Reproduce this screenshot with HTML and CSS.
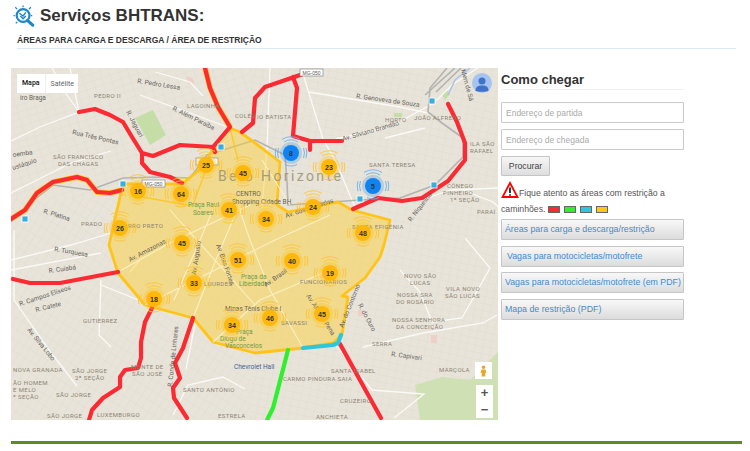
FILE: index.html
```html
<!DOCTYPE html>
<html lang="pt">
<head>
<meta charset="utf-8">
<title>Serviços BHTRANS</title>
<link rel="stylesheet" href="styles.css">
</head>
<body>
<header class="top">
  <svg class="logo" viewBox="0 0 24 24" width="22" height="22">
    <circle class="logo-ring" cx="11" cy="11.500" r="7"/>
    <path class="logo-mark" d="M7 9l4 3 3-4M8 12l3 3 3-3"/>
    <path class="logo-handle" d="M16 17l5.500 5"/>
    <path class="logo-rays" d="M11 .5v2M2.500 2.500l2 2M19.500 2.500l-2 2M.5 11.500h1.500M21 11.500h-1.500M3 20l1.500-1.500"/>
  </svg>
  <h1 class="title">Serviços BHTRANS:</h1>
</header>
<h2 class="subtitle">ÁREAS PARA CARGA E DESCARGA / ÁREA DE RESTRIÇÃO</h2>
<main class="content">
  <div class="map">
    <svg class="map-svg" viewBox="11 68 487 352" width="487" height="352">
      <defs>
        <pattern id="gridA" width="9" height="7" patternUnits="userSpaceOnUse" patternTransform="rotate(-18)">
          <path class="grid-line" d="M0 0H9M0 0V7"/>
        </pattern>
        <pattern id="gridB" width="7" height="10" patternUnits="userSpaceOnUse" patternTransform="rotate(32)">
          <path class="grid-line" d="M0 0H7M0 0V10"/>
        </pattern>
        <pattern id="gridC" width="8" height="7" patternUnits="userSpaceOnUse" patternTransform="rotate(12)">
          <path class="grid-line" d="M0 0H8M0 0V7"/>
        </pattern>
        <g id="halo">
          <path class="arc" d="M-7-11A13 13 0 0 1 7-11M-9-13.500A16 16 0 0 1 9-13.500M-12.500-5A13.500 13.500 0 0 0 -12.500 5M-15-5A16 16 0 0 0 -15 5M12.500-5A13.500 13.500 0 0 1 12.500 5M15-5A16 16 0 0 1 15 5M-6 11.500A13 13 0 0 0 6 11.500"/>
        </g>
        <g id="cy"><circle class="halo-y" r="11"/><use href="#halo" class="arc-y"/><circle class="dot-y" r="8"/></g>
        <g id="cb"><circle class="halo-b" r="11"/><use href="#halo" class="arc-b"/><circle class="dot-b" r="8"/></g>
      </defs>

      <rect class="land" x="11" y="68" width="487" height="352"/>
      <rect class="grid-a" x="11" y="68" width="240" height="130"/>
      <rect class="grid-b" x="11" y="198" width="240" height="222"/>
      <rect class="grid-c" x="251" y="68" width="247" height="352"/>
      <path class="park" d="M135 118l18-8 13 25-16 10z"/>
      <path class="park2" d="M415 385l27-8 28 3 28-28v68h-78z"/>
      <path class="park" d="M394 113h8v4h-8zM442 95l5-5 3 4-5 6z"/>
      <path class="pink" d="M186 76l6 2 3 5-6 1zM431 335h6v8h-6zM358 310h5v6h-5z"/>

      <path class="street-w" d="M70 68l9 44-39 15-29 14M79 112L67 95 52 68M11 193l60-30 40-12M11 270l90-17M11 260l60-15 40-12"/>
      <path class="street-w" d="M14 230V300l38 54 25 32M101 280l-2 55 12 12M101 285l45 18M140 95l50 18 40 15M155 72l35 10 13 14"/>
      <path class="street-w" d="M303 74l20 65 13 23 21 50M309 92l91 15 28 6M336 139l54-12 44-24 18-18 30-20M385 138l40-10M340 344l30 50 12 24M336 345l36 45 52 4-30 24M363 347l60-14 60-10 14-8M463 190l30 12 5 5M421 200l30-10 47-2M400 270l20 22 12 30 30-4 28-50-25-30M270 68l-3 80-5 60"/>
      <path class="street-w" d="M173 415l15-30 35-8 22 12M196 319l-10 50M140 260l-10 12"/>
      <path class="rail" d="M11 222L40 195 53 185 90 190 123 178 160 177 190 178 207 155 255 140 285 155 287 182 288 205 360 200 400 198 435 185 463 157V138L442 123 428 112 430 88 447 68"/>
      <path class="rail-blue" d="M448 95L455 80 470 68"/>
      <path class="rail" d="M425 95l30-27M436 92l25-24"/>

      <path class="area" d="M123 184H182L205 165 213 148 230 128 240 132 255 143 280 162 277 205 288 212 322 205 338 202 352 210 390 220 384 245 380 257 365 278 342 296 348 297 342 335 333 343 303 348 255 353 213 342 193 318 145 305 118 273 109 245z"/>
      <path class="area-line" d="M205 172L193 205M143 197L192 206M230 128L238 160"/>
      <path class="area-street" d="M118 272L170 243 250 205M145 305L275 240 330 215M193 318L215 262 235 215M174 300L200 240 215 205M213 342L260 300 330 270M303 348L270 290 250 240 238 205M170 210L255 305M262 160L290 205"/>

      <path class="road-glow" d="M11 219l14-9 12-17 16-11 24-5 10 3 10 12 13 1 12-3M205 68l5 20 8 19 12 20"/>
      <path class="road-red" d="M79 112l16-3 15 6 13 7 9 15 10 16 11 3 27-11 33 2 2 5M142 153v10l8 9 20 5 12 6M205 68l5 20 8 19 12 20-17 20"/>
      <path class="road-red" d="M242 132l11-9 2-25 10-11 38-13M293 77l4 11-4 48 17 5h32M310 141v9"/>
      <path class="road-red" d="M448 104l9 18 8 21v17l-17 21-26 17-20 3-24-3-25 11"/>
      <path class="road-red" d="M11 219l14-9 12-17 16-11 24-5 10 3 10 12 13 1 12-3M13 279l17 4h30l58-11"/>
      <path class="road-red" d="M152 308l-7 14-4 20v16l-3 10-13 2-5 7v10l-17 11-11 12-3 10M193 318l-10 30-8 15 5 15-7 10 1 10 13 20M340 344l41 74"/>
      <path class="road-green" d="M288 350l-15 58-6 12"/>
      <path class="road-cyan" d="M303 348l30-3 5-2 3-8"/>

      <g class="lbl">
        <text x="137" y="83" transform="rotate(9 137 83)">R. Pedro Lessa</text>
        <text x="20" y="100">iro Braga</text>
        <text x="94" y="98" class="area-lbl">PEDRO II</text>
        <text x="187" y="108" class="area-lbl">LAGOINHA</text>
        <text x="172" y="110" transform="rotate(26 172 110)">R. Além Paraíba</text>
        <text x="126" y="112" transform="rotate(62 126 112)">R. Jaguari</text>
        <text x="72" y="134" transform="rotate(13 72 134)">Rua Três Pontas</text>
        <text x="13" y="157" transform="rotate(-8 13 157)">oemba</text>
        <text x="13" y="170" transform="rotate(-18 13 170)">ustáquio</text>
        <text x="53" y="159" class="area-lbl">SÃO FRANCISCO</text>
        <text x="58" y="166" class="area-lbl">DAS CHAGAS</text>
        <text x="43" y="213" transform="rotate(17 43 213)">R. Platina</text>
        <text x="81" y="226" class="area-lbl">PRADO</text>
        <text x="128" y="228" class="area-lbl">RRO PRETO</text>
        <text x="188" y="207" class="lbl-green">Praça Raul</text>
        <text x="193" y="215" class="lbl-green">Soares</text>
        <text x="235" y="118" class="area-lbl">COLÉG</text>
        <text x="257" y="119" class="area-lbl">IO BATISTA</text>
        <text x="356" y="98" transform="rotate(8 356 98)">R. Genoveva de Souza</text>
        <text x="385" y="122" class="area-lbl">HORTO</text>
        <text x="414" y="120" class="area-lbl">JOÃO ALFREDO</text>
        <text x="343" y="141" transform="rotate(-16 343 141)">Av. Silviano Brandão</text>
        <text x="369" y="167" class="area-lbl">SANTA TERESA</text>
        <text x="470" y="146" class="area-lbl">ILA SÃO</text>
        <text x="470" y="153" class="area-lbl">RAFAEL</text>
        <text x="447" y="188" class="area-lbl">CÔNEGO</text>
        <text x="443" y="195" class="area-lbl">PINHEIRO</text>
        <text x="450" y="202" class="area-lbl">1ª SEÇÃO</text>
        <text x="477" y="214" class="area-lbl">PARAÍ</text>
        <text x="411" y="222" transform="rotate(-52 411 222)">R. Niquelina</text>
        <text x="352" y="229" class="area-lbl">SANTA EFIGÊNIA</text>
        <text x="218" y="181" class="big-lbl">Belo Horizonte</text>
        <text x="236" y="196" class="lbl-dark">CENTRO</text>
        <text x="232" y="204" class="lbl-dark">Shopping Cidade BH</text>
        <text x="286" y="218" transform="rotate(-18 286 218)">Av. dos Andradas</text>
        <text x="54" y="251" transform="rotate(10 54 251)">R. Turquesa</text>
        <text x="49" y="273" transform="rotate(-8 49 273)">R. Cuiabá</text>
        <text x="20" y="306" transform="rotate(-18 20 306)">R. Campos Elíseos</text>
        <text x="36" y="312" transform="rotate(-14 36 312)">R. Catete</text>
        <text x="83" y="323" class="area-lbl">GUTIÉRREZ</text>
        <text x="27" y="330" transform="rotate(51 27 330)">Av. Silva Lobo</text>
        <text x="13" y="372" class="area-lbl">NOVA GRANADA</text>
        <text x="72" y="373" class="area-lbl">SÃO JORGE</text>
        <text x="75" y="380" class="area-lbl">2ª SEÇÃO</text>
        <text x="13" y="385" class="area-lbl">ÃO HOMEM</text>
        <text x="13" y="392" class="area-lbl">E MELO</text>
        <text x="13" y="399" class="area-lbl">ª SEÇÃO</text>
        <text x="56" y="397" class="area-lbl">SÃO JORGE</text>
        <text x="47" y="418" class="area-lbl">SÃO JORGE</text>
        <text x="97" y="417" class="area-lbl">LUXEMBURGO</text>
        <text x="131" y="369" class="area-lbl">MONTE DE</text>
        <text x="132" y="376" class="area-lbl">SÃO JOSÉ</text>
        <text x="172" y="387" transform="rotate(-84 172 387)">R. Conde de Linhares</text>
        <text x="183" y="392" class="area-lbl">SANTO ANTÔNIO</text>
        <text x="218" y="418" class="area-lbl">ESTRELA</text>
        <text x="234" y="369" class="lbl-blue">Chevrolet Hall</text>
        <text x="225" y="311" class="lbl-dark">Minas Tênis Clube I</text>
        <text x="236" y="334" class="lbl-green">Praça</text>
        <text x="220" y="341" class="lbl-green">Diogo de</text>
        <text x="225" y="348" class="lbl-green">Vasconcelos</text>
        <text x="241" y="279" class="lbl-green">Praça da</text>
        <text x="239" y="286" class="lbl-green">Liberdade</text>
        <text x="204" y="286" class="area-lbl">LOURDES</text>
        <text x="300" y="284" class="area-lbl">FUNCIONÁRIOS</text>
        <text x="281" y="325" class="area-lbl">SAVASSI</text>
        <text x="306" y="296" transform="rotate(57 306 296)">Av. Afonso Pena</text>
        <text x="196" y="275" transform="rotate(-82 196 275)">Av. Augusto</text>
        <text x="266" y="287" transform="rotate(-35 266 287)">Av. Brasil</text>
        <text x="130" y="262" transform="rotate(-28 130 262)">Av. Amazonas</text>
        <text x="216" y="245" transform="rotate(70 216 245)">Av. Bias Fortes</text>
        <text x="343" y="328" transform="rotate(-68 343 328)">Av. do Contorno</text>
        <text x="358" y="305" transform="rotate(62 358 305)">R. do Ouro</text>
        <text x="404" y="278" class="area-lbl">NOVO SÃO</text>
        <text x="410" y="285" class="area-lbl">LUCAS</text>
        <text x="397" y="297" class="area-lbl">NOSSA SRA</text>
        <text x="396" y="304" class="area-lbl">DO ROSÁRIO</text>
        <text x="392" y="322" class="area-lbl">NOSSA SENHORA</text>
        <text x="396" y="329" class="area-lbl">DA CONCEIÇÃO</text>
        <text x="446" y="291" class="area-lbl">VILA NOVO</text>
        <text x="445" y="298" class="area-lbl">SÃO LUCAS</text>
        <text x="372" y="346" class="area-lbl">SERRA</text>
        <text x="391" y="356" transform="rotate(8 391 356)">R. Capivari</text>
        <text x="439" y="372" class="area-lbl">MARÇOLA</text>
        <text x="331" y="373" class="area-lbl">SANTA ISABEL</text>
        <text x="283" y="381" class="area-lbl">CARMO PINDURA SAIA</text>
        <text x="340" y="403" class="area-lbl">CRUZEIRO</text>
        <text x="316" y="419" class="area-lbl">ANCHIETA</text>
        <text x="461" y="70" transform="rotate(75 461 70)">Mem de Sá</text>
      </g>

      <g class="shield">
        <rect x="142" y="180" width="23" height="7"/><text x="153.500" y="186">MG-050</text>
        <rect x="300" y="69" width="23" height="7"/><text x="311.500" y="75">MG-050</text>
        <rect x="196" y="158" width="22" height="7"/>
      </g>
      <g class="metro">
        <rect x="120" y="181" width="6" height="6"/><rect x="22" y="216" width="6" height="6"/>
        <rect x="218" y="144" width="6" height="6"/><rect x="429" y="98" width="6" height="6"/>
        <rect x="357" y="196" width="6" height="6"/><rect x="431" y="182" width="6" height="6"/>
      </g>

      <use href="#cy" x="206" y="165"/><text class="num" x="206" y="168">25</text>
      <use href="#cy" x="243" y="173"/><text class="num" x="243" y="176">45</text>
      <use href="#cy" x="138" y="191"/><text class="num" x="138" y="194">16</text>
      <use href="#cy" x="181" y="194"/><text class="num" x="181" y="197">64</text>
      <use href="#cy" x="229" y="210"/><text class="num" x="229" y="213">41</text>
      <use href="#cy" x="120" y="228"/><text class="num" x="120" y="231">26</text>
      <use href="#cy" x="182" y="243"/><text class="num" x="182" y="246">45</text>
      <use href="#cy" x="266" y="219"/><text class="num" x="266" y="222">34</text>
      <use href="#cy" x="313" y="207"/><text class="num" x="313" y="210">24</text>
      <use href="#cy" x="363" y="233"/><text class="num" x="363" y="236">48</text>
      <use href="#cy" x="238" y="260"/><text class="num" x="238" y="263">51</text>
      <use href="#cy" x="292" y="261"/><text class="num" x="292" y="264">40</text>
      <use href="#cy" x="194" y="283"/><text class="num" x="194" y="286">33</text>
      <use href="#cy" x="330" y="273"/><text class="num" x="330" y="276">19</text>
      <use href="#cy" x="154" y="299"/><text class="num" x="154" y="302">18</text>
      <use href="#cy" x="232" y="325"/><text class="num" x="232" y="328">34</text>
      <use href="#cy" x="270" y="318"/><text class="num" x="270" y="321">46</text>
      <use href="#cy" x="322" y="314"/><text class="num" x="322" y="317">45</text>
      <use href="#cy" x="329" y="167"/><text class="num" x="329" y="170">23</text>
      <use href="#cb" x="291" y="153"/><text class="num" x="291" y="156">8</text>
      <use href="#cb" x="373" y="186"/><text class="num" x="373" y="189">5</text>

      <circle class="user-bg" cx="482" cy="83" r="10"/>
      <circle class="user-fg" cx="482" cy="81" r="3.500"/>
      <path class="user-fg" d="M475.500 91c0-4 2-5.500 6.500-5.500s6.500 1.500 6.500 5.500c-2 1-11 1-13 0z"/>
    </svg>

    <div class="map-type">
      <span class="type-on">Mapa</span>
      <span class="type-off">Satélite</span>
    </div>
    <div class="pegman">
      <svg viewBox="0 0 10 16" width="7" height="12">
        <circle class="peg" cx="5" cy="2.500" r="2.500"/>
        <path class="peg" d="M2 6h6l1 5H7.500v5h-5v-5H1z"/>
      </svg>
    </div>
    <div class="zoom">
      <span class="zoom-btn">+</span>
      <span class="zoom-btn">−</span>
    </div>
  </div>

  <aside class="side">
    <h3 class="side-title">Como chegar</h3>
    <input class="field" type="text" placeholder="Endereço de partida">
    <input class="field" type="text" placeholder="Endereço de chegada">
    <button class="search" type="button">Procurar</button>
    <p class="warn">
      <svg class="warn-icon" viewBox="0 0 18 18" width="18" height="18">
        <path class="warn-tri" d="M9 2L1.500 16h15z"/>
        <path class="warn-mark" d="M9 6.500v5.500M9 13.200v1.500"/>
      </svg>Fique atento as áreas com restrição a caminhões.
      <span class="swatch sw-red"></span><span class="swatch sw-green"></span><span class="swatch sw-cyan"></span><span class="swatch sw-yellow"></span>
    </p>
    <a class="action" href="#">Áreas para carga e descarga/restrição</a>
    <a class="action action-in" href="#">Vagas para motocicletas/motofrete</a>
    <a class="action" href="#">Vagas para motocicletas/motofrete (em PDF)</a>
    <a class="action" href="#">Mapa de restrição (PDF)</a>
  </aside>
</main>
<footer class="foot"></footer>
</body>
</html>
```

FILE: styles.css
```css
* { box-sizing: border-box; }
html, body { margin: 0; padding: 0; }
body {
  width: 750px;
  height: 451px;
  overflow: hidden;
  background: #fff;
  font-family: "Liberation Sans", Arial, sans-serif;
  color: #333;
}
.top {
  display: flex;
  align-items: center;
  gap: 5px;
  padding: 2px 0 0 13px;
  height: 30px;
}
.logo { flex: none; }
.logo-ring { fill: #fff; stroke: #1c87c9; stroke-width: 2.4; }
.logo-mark { fill: none; stroke: #1c87c9; stroke-width: 1.6; }
.logo-handle { fill: none; stroke: #1c87c9; stroke-width: 3.4; stroke-linecap: round; }
.logo-rays { fill: none; stroke: #1c87c9; stroke-width: 1.4; }
.title {
  margin: 0;
  font-size: 17px;
  line-height: 22px;
  font-weight: 700;
  color: #333;
}
.subtitle {
  margin: 3px 14px 0 17px;
  height: 16px;
  border-bottom: 1px solid #dbe9f7;
  font-size: 8.500px;
  line-height: 14px;
  font-weight: 700;
  color: #333;
}
.content {
  display: flex;
  gap: 3px;
  margin: 19px 0 0 11px;
  height: 352px;
}
.map {
  position: relative;
  flex: none;
  width: 487px;
  height: 352px;
  overflow: hidden;
  background: #e8e4dc;
}
.map-svg { display: block; }
.land { fill: #e8e4da; }
.grid-a { fill: url(#gridA); }
.grid-b { fill: url(#gridB); }
.grid-c { fill: url(#gridC); }
.grid-line { fill: none; stroke: #dbd6cb; stroke-width: .6; }
.park { fill: #c5dea8; }
.park2 { fill: #cfe0b5; }
.pink { fill: #efcfc8; }
.street-w { fill: none; stroke: #fbfaf7; stroke-width: 1.300; }
.rail { fill: none; stroke: #b3b3b0; stroke-width: 1.600; }
.rail-blue { fill: none; stroke: #a9c5ee; stroke-width: 1.600; }
.area { fill: #fdd030; fill-opacity: .46; stroke: #ffc416; stroke-width: 2.800; stroke-linejoin: round; }
.area-line { fill: none; stroke: #ffc416; stroke-width: 1.300; opacity: .85; }
.area-street { fill: none; stroke: #fbf0c4; stroke-width: 1.100; }
.road-glow { fill: none; stroke: #ffc416; stroke-width: 5.500; }
.road-red, .road-green, .road-cyan { fill: none; stroke-width: 4.200; stroke-linejoin: round; stroke-linecap: round; }
.road-red { stroke: #fb2a33; }
.road-green { stroke: #2ef02e; }
.road-cyan { stroke: #2ec6dc; }
.lbl text {
  font-family: Roboto, "Liberation Sans", sans-serif;
  font-size: 6.500px;
  fill: #66625a;
}
.lbl .area-lbl { font-size: 6px; letter-spacing: .4px; fill: #8c8373; }
.lbl .big-lbl { font-size: 14px; letter-spacing: 2.400px; fill: #a59c7c; }
.lbl .lbl-green { fill: #6f9c48; }
.lbl .lbl-dark { fill: #6a6552; }
.lbl .lbl-blue { fill: #3f5e93; }
.shield rect { fill: #fff; stroke: #8a8a8a; stroke-width: .7; }
.shield text { font-family: "Liberation Sans", sans-serif; font-size: 5px; text-anchor: middle; fill: #555; }
.metro rect { fill: #38ade0; stroke: #fff; stroke-width: .8; }
.arc { fill: none; stroke-width: .9; }
.arc-y { stroke: #fdc436; }
.arc-b { stroke: #6ab0f3; }
.halo-y { fill: #ffc416; fill-opacity: .35; }
.halo-b { fill: #1c86f0; fill-opacity: .25; }
.dot-y { fill: #feb80d; }
.dot-b { fill: #0f83f2; }
.num {
  font-family: "Liberation Sans", sans-serif;
  font-size: 7px;
  font-weight: 700;
  text-anchor: middle;
  fill: #333;
}
.user-bg { fill: #a6c4f2; }
.user-fg { fill: #3f73c9; }
.map-type {
  position: absolute;
  left: 6px;
  top: 6px;
  display: flex;
  align-items: center;
  height: 19px;
  padding: 0 0 0 5px;
  background: #fff;
  font-family: Roboto, "Liberation Sans", sans-serif;
  font-size: 7px;
}
.type-on { color: #111; font-weight: 500; padding-right: 5px; border-right: 1px solid #eee; line-height: 19px; }
.type-off { color: #666; padding: 0 4px 0 5px; }
.pegman {
  position: absolute;
  left: 464px;
  top: 294px;
  display: flex;
  align-items: center;
  justify-content: center;
  width: 17px;
  height: 17px;
  background: #fff;
}
.peg { fill: #e8a72a; }
.zoom {
  position: absolute;
  left: 465px;
  top: 317px;
  display: flex;
  flex-direction: column;
  width: 17px;
  height: 33px;
  background: #fff;
}
.zoom-btn {
  flex: 1;
  text-align: center;
  font-size: 13px;
  line-height: 16px;
  font-weight: 700;
  color: #555;
}
.side {
  flex: none;
  width: 183px;
}
.side-title {
  margin: 4px 0 12px;
  height: 18px;
  border-bottom: 1px solid #f1f1f1;
  font-size: 13px;
  line-height: 16px;
  font-weight: 700;
  color: #333;
}
.field {
  display: block;
  width: 183px;
  height: 21px;
  margin: 0 0 6px;
  padding: 0 4px;
  border: 1px solid #ccc;
  border-radius: 1px;
  background: #fff;
  font-family: "Liberation Sans", sans-serif;
  font-size: 8.500px;
  box-shadow: inset 0 0 1px #ddd;
}
.field::placeholder { color: #aaa; opacity: 1; }
.search {
  display: block;
  width: 49px;
  height: 20px;
  padding: 0;
  border: 1px solid #c4c4c4;
  border-radius: 1px;
  background: linear-gradient(#f6f6f6, #dedede);
  font-family: "Liberation Sans", sans-serif;
  font-size: 8.700px;
  color: #444;
}
.warn {
  margin: 5px 0 1px;
  font-size: 8.700px;
  line-height: 16px;
  height: 37px;
  width: 183px;
  color: #555;
}
.warn-icon { vertical-align: -3px; }
.warn-tri { fill: #fff; stroke: #f00; stroke-width: 1.800; stroke-linejoin: miter; }
.warn-mark { fill: none; stroke: #222; stroke-width: 1.800; }
.swatch {
  display: inline-block;
  width: 12px;
  height: 7px;
  margin: 0 0 -1px 4px;
  border: 1px solid #666;
}
.swatch:first-of-type { margin-left: 0; }
.sw-red { background: #fb2a33; }
.sw-green { background: #2ef02e; }
.sw-cyan { background: #2ec6dc; }
.sw-yellow { background: #fec80f; }
.action {
  display: block;
  width: 183px;
  height: 21px;
  margin: 0 0 5.700px;
  padding: 0 3px;
  border: 1px solid #c6c6c6;
  border-radius: 1px;
  background: linear-gradient(#f8f8f8, #dcdcdc);
  font-size: 8.800px;
  line-height: 18px;
  color: #428bca;
  text-decoration: none;
  white-space: nowrap;
}
.action-in { padding-left: 5px; }
.foot {
  margin: 21px 8px 0 11px;
  height: 3px;
  background: #5f8a1f;
}
```
